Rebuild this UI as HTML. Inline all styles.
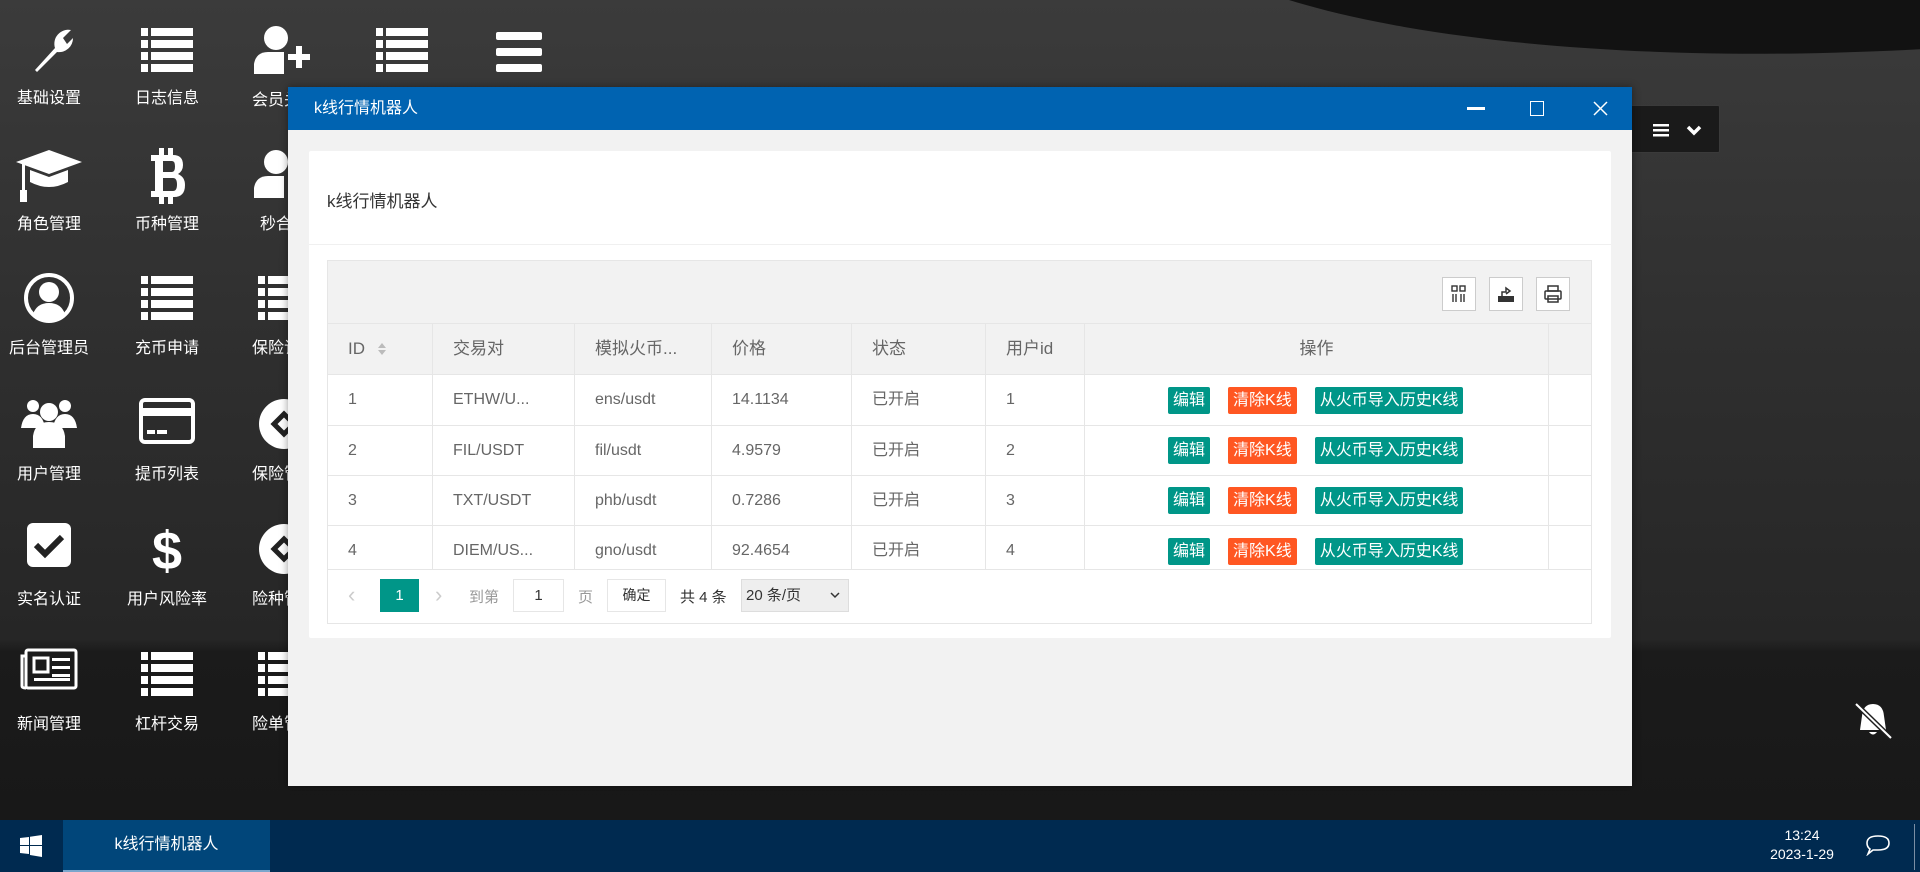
<!DOCTYPE html>
<html><head><meta charset="utf-8">
<style>
*{margin:0;padding:0;box-sizing:border-box}
body{width:1920px;height:872px;overflow:hidden;position:relative;font-family:"Liberation Sans","Noto Sans CJK SC",sans-serif;background:#222}
.bg{position:absolute;left:0;top:0;width:1920px;height:820px;background:linear-gradient(180deg,#3b3b3b 0%,#2e2e2e 45%,#262626 78%,#1b1b1b 79.5%,#181818 100%)}
.sw1{position:absolute;left:1150px;top:-330px;width:1500px;height:380px;border-radius:0 0 50% 50%;background:#121212;transform:rotate(-3deg)}
.sw3{position:absolute;left:1500px;top:160px;width:900px;height:400px;border-radius:50%;background:radial-gradient(ellipse at center,rgba(0,0,0,.0),rgba(0,0,0,0));}
.di{position:absolute;width:118px;text-align:center;color:#fff;font-size:16px}
.di svg{display:block;margin:0 auto}
.di .l{position:absolute;left:0;width:118px;text-align:center}
.dlg{position:absolute;left:288px;top:87px;width:1344px;height:699px;background:#f2f2f2;box-shadow:0 0 8px rgba(0,0,0,.4)}
.tb{height:43px;background:#0063b1;color:#fff;font-size:16px;line-height:43px;padding-left:26px;position:relative}
.card{position:absolute;left:21px;top:64px;width:1302px;height:487px;background:#fff;border-radius:2px}
.ch{height:94px;border-bottom:1px solid #f0f0f0;font-size:17px;color:#333;padding:36px 0 0 18px}
.tbl{position:absolute;left:18px;top:109px;width:1265px;height:364px;border:1px solid #e6e6e6;background:#fff}
.tool{height:63px;background:#f2f2f2;border-bottom:1px solid #e6e6e6;position:relative}
.ti{position:absolute;top:16px;width:34px;height:34px;border:1px solid #ccc;background:#fff}
.row{position:absolute;left:0;width:1263px;border-bottom:1px solid #e6e6e6;font-size:16px;color:#666;line-height:20px}
.row div{position:absolute;top:0;height:100%;border-right:1px solid #e6e6e6;padding-left:20px;display:flex;align-items:center;white-space:nowrap}
.hd{background:#f2f2f2;color:#666}
.b{display:inline-block;height:27px;line-height:27px;padding:0 5px;color:#fff;font-size:16px;border-radius:2px}
.g{background:#009688}.o{background:#ff5722}
.pg{position:absolute;top:308px;left:0;width:1263px;height:55px;font-size:15px;color:#666}
.pg span{position:absolute}
.task{position:absolute;left:0;top:820px;width:1920px;height:52px;background:#002a50}
</style></head><body>
<div class="bg"></div>
<div class="sw1"></div>

<!-- desktop icons -->
<div class="di" style="left:-10px;top:24px"><svg width="56" height="50" viewBox="0 0 56 50"><path d="M14 46 L34 24 A14 14 0 0 1 50 6 L42 14 L46 20 L52 14 A14 14 0 0 1 36 28 L16 48Z" fill="#fff"/></svg><div class="l" style="top:60px">基础设置</div></div>
<div class="di" style="left:108px;top:24px"><svg width="52" height="50" viewBox="0 0 52 50"><g fill="#fff"><rect x="0" y="4" width="7" height="8"/><rect x="10" y="4" width="42" height="8"/><rect x="0" y="16" width="7" height="8"/><rect x="10" y="16" width="42" height="8"/><rect x="0" y="28" width="7" height="8"/><rect x="10" y="28" width="42" height="8"/><rect x="0" y="40" width="7" height="8"/><rect x="10" y="40" width="42" height="8"/></g></svg><div class="l" style="top:60px">日志信息</div></div>
<div class="di" style="left:225px;top:24px"><svg width="60" height="52" viewBox="0 0 60 52"><g fill="#fff"><circle cx="22" cy="14" r="12"/><path d="M0 50 V40 Q2 28 14 28 H30 V50Z"/><path d="M34 30 H42 V22 H48 V30 H56 V36 H48 V44 H42 V36 H34Z"/></g></svg><div class="l" style="top:62px">会员关系</div></div>
<div class="di" style="left:343px;top:24px"><svg width="52" height="50" viewBox="0 0 52 50"><g fill="#fff"><rect x="0" y="4" width="7" height="8"/><rect x="10" y="4" width="42" height="8"/><rect x="0" y="16" width="7" height="8"/><rect x="10" y="16" width="42" height="8"/><rect x="0" y="28" width="7" height="8"/><rect x="10" y="28" width="42" height="8"/><rect x="0" y="40" width="7" height="8"/><rect x="10" y="40" width="42" height="8"/></g></svg></div>
<div class="di" style="left:460px;top:24px"><svg width="46" height="50" viewBox="0 0 46 50"><g fill="#fff"><rect y="8" width="46" height="8" rx="2"/><rect y="24" width="46" height="8" rx="2"/><rect y="40" width="46" height="8" rx="2"/></g></svg></div>

<div class="di" style="left:-10px;top:148px"><svg width="66" height="56" viewBox="0 0 66 56"><g fill="#fff"><path d="M33 2 L66 14 L33 26 L0 14Z"/><path d="M14 22 V34 Q33 44 52 34 V22 L33 29Z"/><rect x="6" y="16" width="3" height="28"/><rect x="4" y="42" width="7" height="12"/></g></svg><div class="l" style="top:62px">角色管理</div></div>
<div class="di" style="left:108px;top:148px"><svg width="40" height="56" viewBox="0 0 40 56"><g fill="#fff"><rect x="12" y="0" width="5" height="8"/><rect x="21" y="0" width="5" height="8"/><rect x="12" y="48" width="5" height="8"/><rect x="21" y="48" width="5" height="8"/><path d="M4 7 H26 Q36 7 36 17 Q36 23 31 26 Q38 29 38 37 Q38 49 27 49 H4 V43 H8 V13 H4Z M16 13 V24 H25 Q28 24 28 18.5 Q28 13 25 13Z M16 30 V43 H26 Q30 43 30 36.5 Q30 30 26 30Z" fill-rule="evenodd"/></g></svg><div class="l" style="top:62px">币种管理</div></div>
<div class="di" style="left:225px;top:148px"><svg width="60" height="52" viewBox="0 0 60 52"><g fill="#fff"><circle cx="22" cy="14" r="12"/><path d="M0 50 V40 Q2 28 14 28 H30 V50Z"/></g></svg><div class="l" style="top:62px">秒合约</div></div>

<div class="di" style="left:-10px;top:272px"><svg width="52" height="52" viewBox="0 0 52 52"><circle cx="26" cy="26" r="23" fill="none" stroke="#fff" stroke-width="4"/><circle cx="26" cy="20" r="10" fill="#fff"/><path d="M10 42 Q14 31 26 31 Q38 31 42 42 Q26 54 10 42Z" fill="#fff"/></svg><div class="l" style="top:62px">后台管理员</div></div>
<div class="di" style="left:108px;top:272px"><svg width="52" height="50" viewBox="0 0 52 50"><g fill="#fff"><rect x="0" y="4" width="7" height="8"/><rect x="10" y="4" width="42" height="8"/><rect x="0" y="16" width="7" height="8"/><rect x="10" y="16" width="42" height="8"/><rect x="0" y="28" width="7" height="8"/><rect x="10" y="28" width="42" height="8"/><rect x="0" y="40" width="7" height="8"/><rect x="10" y="40" width="42" height="8"/></g></svg><div class="l" style="top:62px">充币申请</div></div>
<div class="di" style="left:225px;top:272px"><svg width="52" height="50" viewBox="0 0 52 50"><g fill="#fff"><rect x="0" y="4" width="7" height="8"/><rect x="10" y="4" width="42" height="8"/><rect x="0" y="16" width="7" height="8"/><rect x="10" y="16" width="42" height="8"/><rect x="0" y="28" width="7" height="8"/><rect x="10" y="28" width="42" height="8"/><rect x="0" y="40" width="7" height="8"/><rect x="10" y="40" width="42" height="8"/></g></svg><div class="l" style="top:62px">保险订单</div></div>

<div class="di" style="left:-10px;top:398px"><svg width="56" height="52" viewBox="0 0 56 52"><g fill="#fff"><circle cx="12" cy="8" r="6"/><circle cx="44" cy="8" r="6"/><circle cx="28" cy="14" r="9"/><path d="M0 30 Q2 16 12 16 Q22 16 24 30Z"/><path d="M32 30 Q34 16 44 16 Q54 16 56 30Z"/><path d="M12 50 V38 Q14 24 28 24 Q42 24 44 38 V50Z"/></g></svg><div class="l" style="top:62px">用户管理</div></div>
<div class="di" style="left:108px;top:398px"><svg width="56" height="46" viewBox="0 0 56 46"><rect x="2" y="2" width="52" height="42" rx="4" fill="none" stroke="#fff" stroke-width="4"/><rect x="2" y="10" width="52" height="8" fill="#fff"/><rect x="8" y="32" width="8" height="4" fill="#fff"/><rect x="18" y="32" width="10" height="4" fill="#fff"/></svg><div class="l" style="top:62px">提币列表</div></div>
<div class="di" style="left:225px;top:398px"><svg width="52" height="52" viewBox="0 0 52 52"><circle cx="26" cy="26" r="25" fill="#fff"/><path d="M16 26 L26 16 L36 26 L26 36Z" fill="none" stroke="#222" stroke-width="5"/></svg><div class="l" style="top:62px">保险管理</div></div>

<div class="di" style="left:-10px;top:523px"><svg width="44" height="44" viewBox="0 0 44 44"><rect width="44" height="44" rx="6" fill="#fff"/><path d="M9 22 L18 31 L35 14" fill="none" stroke="#222" stroke-width="6"/></svg><div class="l" style="top:62px">实名认证</div></div>
<div class="di" style="left:108px;top:523px"><svg width="30" height="52" viewBox="0 0 30 52"><text x="15" y="46" text-anchor="middle" font-size="54" font-weight="bold" fill="#fff" font-family="Liberation Sans">$</text></svg><div class="l" style="top:62px">用户风险率</div></div>
<div class="di" style="left:225px;top:523px"><svg width="52" height="52" viewBox="0 0 52 52"><circle cx="26" cy="26" r="25" fill="#fff"/><path d="M16 26 L26 16 L36 26 L26 36Z" fill="none" stroke="#222" stroke-width="5"/></svg><div class="l" style="top:62px">险种管理</div></div>

<div class="di" style="left:-10px;top:648px"><svg width="58" height="42" viewBox="0 0 58 42"><rect x="6" y="2" width="50" height="38" rx="2" fill="none" stroke="#fff" stroke-width="3"/><path d="M6 8 H2 V38 Q2 40 6 40" fill="none" stroke="#fff" stroke-width="3"/><rect x="14" y="10" width="14" height="14" fill="none" stroke="#fff" stroke-width="3"/><g fill="#fff"><rect x="32" y="10" width="18" height="3"/><rect x="32" y="18" width="18" height="3"/><rect x="32" y="26" width="18" height="3"/><rect x="14" y="30" width="36" height="3"/></g></svg><div class="l" style="top:62px">新闻管理</div></div>
<div class="di" style="left:108px;top:648px"><svg width="52" height="50" viewBox="0 0 52 50"><g fill="#fff"><rect x="0" y="4" width="7" height="8"/><rect x="10" y="4" width="42" height="8"/><rect x="0" y="16" width="7" height="8"/><rect x="10" y="16" width="42" height="8"/><rect x="0" y="28" width="7" height="8"/><rect x="10" y="28" width="42" height="8"/><rect x="0" y="40" width="7" height="8"/><rect x="10" y="40" width="42" height="8"/></g></svg><div class="l" style="top:62px">杠杆交易</div></div>
<div class="di" style="left:225px;top:648px"><svg width="52" height="50" viewBox="0 0 52 50"><g fill="#fff"><rect x="0" y="4" width="7" height="8"/><rect x="10" y="4" width="42" height="8"/><rect x="0" y="16" width="7" height="8"/><rect x="10" y="16" width="42" height="8"/><rect x="0" y="28" width="7" height="8"/><rect x="10" y="28" width="42" height="8"/><rect x="0" y="40" width="7" height="8"/><rect x="10" y="40" width="42" height="8"/></g></svg><div class="l" style="top:62px">险单管理</div></div>

<!-- top right control -->
<div style="position:absolute;left:1630px;top:105px;width:90px;height:48px;border:1px solid #3a3a3a;background:#1a1a1a;border-radius:2px">
<svg style="position:absolute;left:22px;top:17px" width="16" height="14"><g fill="#fff"><rect y="1" width="16" height="2.5"/><rect y="6" width="16" height="2.5"/><rect y="11" width="16" height="2.5"/></g></svg>
<svg style="position:absolute;left:55px;top:18px" width="16" height="12"><path d="M2 3 L8 9 L14 3" fill="none" stroke="#fff" stroke-width="3.5"/></svg>
</div>
<!-- bell slash -->
<svg style="position:absolute;left:1853px;top:700px" width="40" height="40" viewBox="0 0 40 40"><path d="M20 4 Q30 4 31 16 L33 30 H7 L9 16 Q10 4 20 4Z" fill="#fff"/><path d="M16 32 Q20 37 24 32Z" fill="#fff"/><path d="M3 4 L38 38" stroke="#1e1e1e" stroke-width="5"/><path d="M3 4 L38 38" stroke="#fff" stroke-width="2"/></svg>

<!-- dialog -->
<div class="dlg">
 <div class="tb">k线行情机器人
  <div style="position:absolute;left:1179px;top:20px;width:18px;height:3px;background:#fff"></div>
  <div style="position:absolute;left:1242px;top:14px;width:14px;height:15px;border:1px solid #fff"></div>
  <svg style="position:absolute;left:1305px;top:14px" width="15" height="15"><path d="M1 1 L14 14 M14 1 L1 14" stroke="#fff" stroke-width="1.5"/></svg>
 </div>
 <div class="card">
  <div class="ch">k线行情机器人</div>
  <div class="tbl">
   <div class="tool">
    <div class="ti" style="left:1114px"><svg width="32" height="32"><g fill="none" stroke="#333" stroke-width="1.4"><rect x="9" y="8" width="5" height="5"/><rect x="17" y="8" width="5" height="5"/><path d="M10 16 V24 M13 16 V24 M18 16 V24 M21 16 V24"/></g></svg></div>
    <div class="ti" style="left:1161px"><svg width="32" height="32"><g fill="#333"><path d="M8 18 H24 V24 H8Z"/><path d="M12 18 V14 H16 V10 L20 13 L16 16" fill="none" stroke="#333" stroke-width="1.5"/></g></svg></div>
    <div class="ti" style="left:1208px"><svg width="32" height="32"><g fill="none" stroke="#333" stroke-width="1.5"><rect x="11" y="8" width="10" height="5"/><rect x="8" y="13" width="16" height="8" rx="1"/><rect x="11" y="18" width="10" height="6"/></g></svg></div>
   </div>
   <div class="row hd" style="top:63px;height:51px;font-size:17px">
    <div style="left:0;width:105px">ID <svg style="margin-left:12px" width="10" height="16"><path d="M5 2 L9 7 H1Z M5 14 L9 9 H1Z" fill="#bbb"/></svg></div>
    <div style="left:105px;width:142px">交易对</div>
    <div style="left:247px;width:137px">模拟火币...</div>
    <div style="left:384px;width:140px">价格</div>
    <div style="left:524px;width:134px">状态</div>
    <div style="left:658px;width:99px">用户id</div>
    <div style="left:757px;width:464px;justify-content:center;padding:0">操作</div>
   </div>
   <div class="row" style="top:114px;height:51px">
    <div style="left:0;width:105px">1</div><div style="left:105px;width:142px">ETHW/U...</div><div style="left:247px;width:137px">ens/usdt</div><div style="left:384px;width:140px">14.1134</div><div style="left:524px;width:134px">已开启</div><div style="left:658px;width:99px">1</div>
    <div style="left:757px;width:464px;padding-left:83px;gap:18px"><span class="b g">编辑</span><span class="b o">清除K线</span><span class="b g">从火币导入历史K线</span></div>
   </div>
   <div class="row" style="top:165px;height:50px">
    <div style="left:0;width:105px">2</div><div style="left:105px;width:142px">FIL/USDT</div><div style="left:247px;width:137px">fil/usdt</div><div style="left:384px;width:140px">4.9579</div><div style="left:524px;width:134px">已开启</div><div style="left:658px;width:99px">2</div>
    <div style="left:757px;width:464px;padding-left:83px;gap:18px"><span class="b g">编辑</span><span class="b o">清除K线</span><span class="b g">从火币导入历史K线</span></div>
   </div>
   <div class="row" style="top:215px;height:50px">
    <div style="left:0;width:105px">3</div><div style="left:105px;width:142px">TXT/USDT</div><div style="left:247px;width:137px">phb/usdt</div><div style="left:384px;width:140px">0.7286</div><div style="left:524px;width:134px">已开启</div><div style="left:658px;width:99px">3</div>
    <div style="left:757px;width:464px;padding-left:83px;gap:18px"><span class="b g">编辑</span><span class="b o">清除K线</span><span class="b g">从火币导入历史K线</span></div>
   </div>
   <div class="row" style="top:265px;height:44px;overflow:hidden">
    <div style="left:0;width:105px;align-items:flex-start;padding-top:15px">4</div><div style="left:105px;width:142px;align-items:flex-start;padding-top:15px">DIEM/US...</div><div style="left:247px;width:137px;align-items:flex-start;padding-top:15px">gno/usdt</div><div style="left:384px;width:140px;align-items:flex-start;padding-top:15px">92.4654</div><div style="left:524px;width:134px;align-items:flex-start;padding-top:15px">已开启</div><div style="left:658px;width:99px;align-items:flex-start;padding-top:15px">4</div>
    <div style="left:757px;width:464px;padding-left:83px;gap:18px;align-items:flex-start;padding-top:12px"><span class="b g">编辑</span><span class="b o">清除K线</span><span class="b g">从火币导入历史K线</span></div>
   </div>
   <div class="pg">
    <span style="left:20px;top:13px;color:#ccc;font-size:22px">&#x2039;</span>
    <span style="left:52px;top:10px;width:39px;height:33px;background:#009688;color:#fff;text-align:center;line-height:33px">1</span>
    <span style="left:107px;top:13px;color:#ccc;font-size:22px">&#x203A;</span>
    <span style="left:141px;top:17px;color:#999">到第</span>
    <span style="left:185px;top:10px;width:51px;height:33px;border:1px solid #e6e6e6;text-align:center;line-height:31px;color:#333">1</span>
    <span style="left:250px;top:17px;color:#999">页</span>
    <span style="left:279px;top:10px;width:59px;height:33px;border:1px solid #e6e6e6;text-align:center;line-height:31px;color:#333;font-size:14px">确定</span>
    <span style="left:352px;top:17px;color:#333">共 4 条</span>
    <span style="left:413px;top:10px;width:108px;height:33px;background:#eee;border:1px solid #ddd;line-height:31px;padding-left:4px;color:#333">20 条/页 <svg style="position:absolute;right:8px;top:12px" width="10" height="7"><path d="M1 1 L5 5 L9 1" fill="none" stroke="#333" stroke-width="1.5"/></svg></span>
   </div>
  </div>
 </div>
</div>

<!-- taskbar -->
<div class="task">
 <svg style="position:absolute;left:20px;top:15px" width="22" height="22"><g fill="#fff"><path d="M0 3 L9 2 V10 H0Z"/><path d="M10 1.8 L22 0 V10 H10Z"/><path d="M0 11 H9 V19 L0 18Z"/><path d="M10 11 H22 V22 L10 20Z"/></g></svg>
 <div style="position:absolute;left:63px;top:0;width:207px;height:52px;background:#01467a;border-bottom:2px solid #7aa6cc;color:#fff;font-size:16px;text-align:center;line-height:50px">k线行情机器人</div>
 <div style="position:absolute;left:1766px;top:6px;width:72px;text-align:center;color:#fff;font-size:14px;line-height:19px">13:24<br>2023-1-29</div>
 <svg style="position:absolute;left:1865px;top:14px" width="26" height="22"><path d="M13 2 Q24 2 24 9 Q24 16 13 16 L8 16 L3 20 L5 15 Q2 13 2 9 Q2 2 13 2Z" fill="none" stroke="#fff" stroke-width="1.6"/></svg>
 <div style="position:absolute;left:1914px;top:4px;width:1px;height:46px;background:#7a8ea4"></div>
</div>
</body></html>
